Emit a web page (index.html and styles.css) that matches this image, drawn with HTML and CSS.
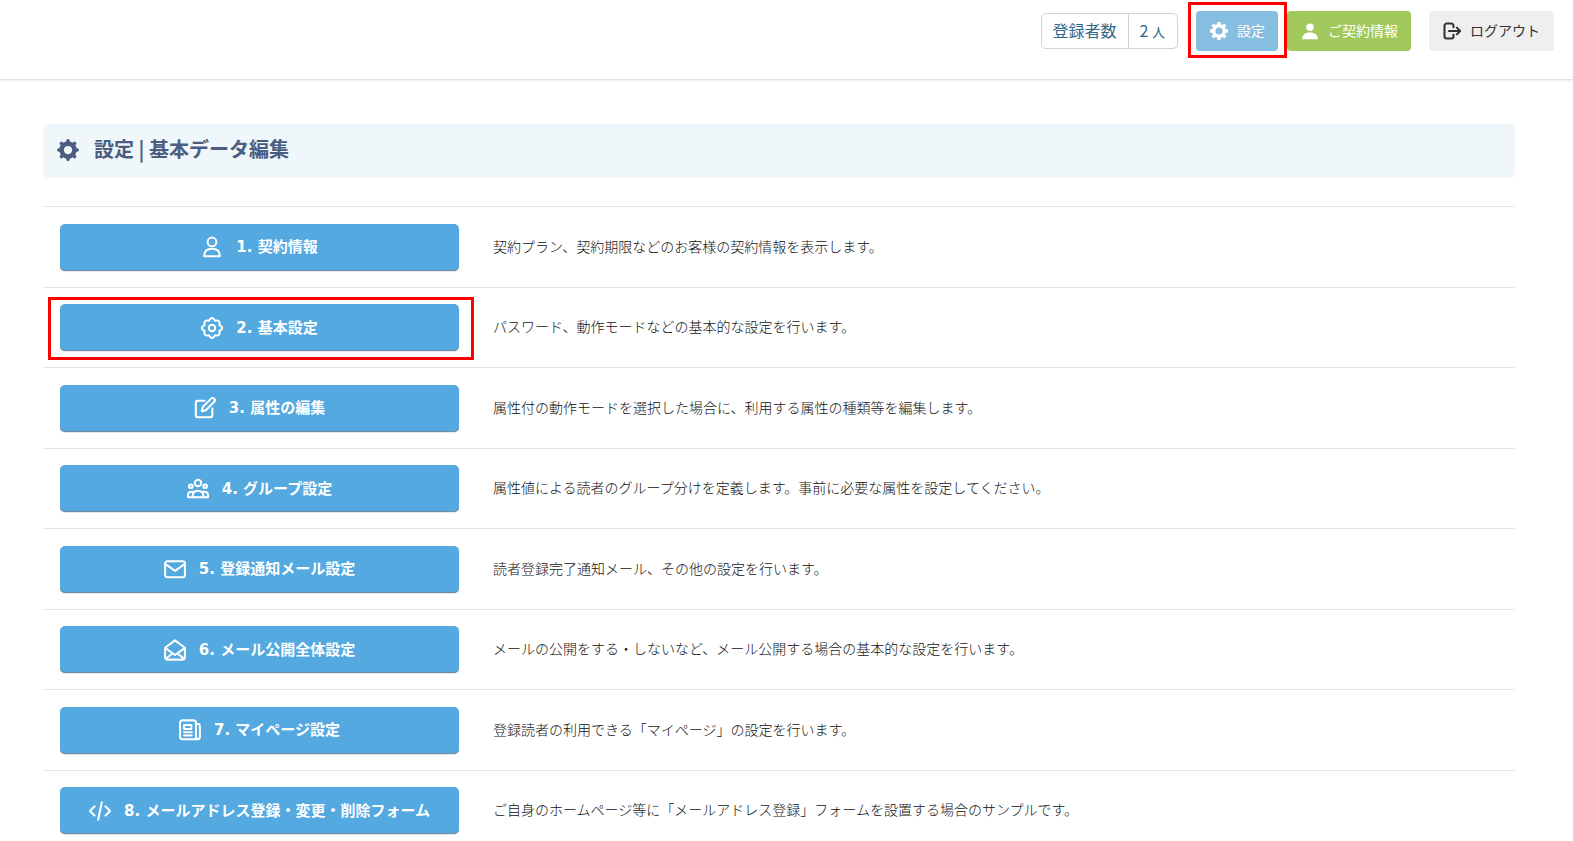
FILE: index.html
```html
<!DOCTYPE html>
<html lang="ja">
<head>
    <meta charset="UTF-8">
    <meta name="viewport" content="width=device-width, initial-scale=1.0">
    <title>設定 | 基本データ編集</title>
    <link rel="stylesheet" href="styles.css">
</head>
<body>
    <header class="header">
        <dl class="counter">
            <dt>登録者数</dt>
            <dd>2 <small>人</small></dd>
        </dl>
        <div class="marked marked-nav">
            <button type="button" class="btn-nav btn-settings">
                <svg class="icon-sm" viewBox="0 0 24 24" fill="none" stroke="currentColor" stroke-width="4.5">
                    <circle cx="12" cy="12" r="7"/>
                    <path stroke-width="4.4" d="M12 0v5M12 19v5M0 12h5M19 12h5M3.5 3.5l3.2 3.2M17.3 17.3l3.2 3.2M3.5 20.5l3.2-3.2M17.3 6.7l3.2-3.2"/>
                </svg>
                <span>設定</span>
            </button>
        </div>
        <button type="button" class="btn-nav btn-contract">
            <svg class="icon-sm" viewBox="0 0 24 24" fill="currentColor">
                <circle cx="12" cy="7" r="5"/>
                <path d="M1.5 23c0-6 4-9 10.5-9s10.5 3 10.5 9z"/>
            </svg>
            <span>ご契約情報</span>
        </button>
        <button type="button" class="btn-nav btn-logout">
            <svg class="icon-sm" viewBox="0 0 24 24" fill="none" stroke="currentColor" stroke-width="2.8" stroke-linecap="round" stroke-linejoin="round">
                <path d="M14 7V5a3 3 0 0 0-3-3H5a3 3 0 0 0-3 3v14a3 3 0 0 0 3 3h6a3 3 0 0 0 3-3v-2M8 12h15M18.5 7.5 23 12l-4.5 4.5"/>
            </svg>
            <span>ログアウト</span>
        </button>
    </header>

    <main class="content">
        <h1 class="page-title">
            <svg class="icon" viewBox="0 0 24 24" fill="none" stroke="currentColor" stroke-width="5" stroke-linecap="round">
                <circle cx="12" cy="12" r="7"/>
                <path stroke-width="4" d="M12 2v3M12 19v3M2 12h3M19 12h3M4.9 4.9l2 2M17.1 17.1l2 2M4.9 19.1l2-2M17.1 6.9l2-2"/>
            </svg>
            <span>設定 | 基本データ編集</span>
        </h1>

        <table class="menu">
            <tr>
                <td>
                    <button type="button" class="btn-menu">
                        <svg class="icon" viewBox="0 0 24 24">
                            <circle cx="12" cy="6.5" r="4.8"/>
                            <path d="M3.5 22c0-5 3-8 8.5-8s8.5 3 8.5 8z"/>
                        </svg>
                        <span>1. 契約情報</span>
                    </button>
                </td>
                <td>契約プラン、契約期限などのお客様の契約情報を表示します。</td>
            </tr>
            <tr>
                <td>
                    <div class="marked marked-menu">
                        <button type="button" class="btn-menu">
                            <svg class="icon" viewBox="0 0 24 24">
                                <path d="M8.7 4Q12-2 15.3 4Q21.4 2.6 20 8.7Q26 12 20 15.3Q21.4 21.4 15.3 20Q12 26 8.7 20Q2.6 21.4 4 15.3Q-2 12 4 8.7Q2.6 2.6 8.7 4z"/>
                                <circle cx="12" cy="12" r="3.5"/>
                            </svg>
                            <span>2. 基本設定</span>
                        </button>
                    </div>
                </td>
                <td>パスワード、動作モードなどの基本的な設定を行います。</td>
            </tr>
            <tr>
                <td>
                    <button type="button" class="btn-menu">
                        <svg class="icon" viewBox="0 0 24 24">
                            <path d="M11.5 4H4a2 2 0 0 0-2 2v14a2 2 0 0 0 2 2h14a2 2 0 0 0 2-2v-7.5"/>
                            <path d="M8.5 15.5l1-4.5 9.2-9.2a2.2 2.2 0 0 1 3.3 3.3L13 14.5z"/>
                        </svg>
                        <span>3. 属性の編集</span>
                    </button>
                </td>
                <td>属性付の動作モードを選択した場合に、利用する属性の種類等を編集します。</td>
            </tr>
            <tr>
                <td>
                    <button type="button" class="btn-menu">
                        <svg class="icon" viewBox="0 0 24 24">
                            <circle cx="12" cy="5.5" r="3.5"/>
                            <circle cx="4.2" cy="9" r="2"/>
                            <circle cx="19.8" cy="9" r="2"/>
                            <path d="M6 21c0-4.5 2-7 6-7s6 2.5 6 7zM6 21H1v-2.5c0-2.500 2-3.800 5.500-3.500M18 21h5v-2.500c0-2.500-2-3.800-5.500-3.500"/>
                        </svg>
                        <span>4. グループ設定</span>
                    </button>
                </td>
                <td>属性値による読者のグループ分けを定義します。事前に必要な属性を設定してください。</td>
            </tr>
            <tr>
                <td>
                    <button type="button" class="btn-menu">
                        <svg class="icon" viewBox="0 0 24 24">
                            <rect x="1.2" y="3.5" width="21.6" height="17.5" rx="2.5"/>
                            <path d="M2 7l10 7 10-7"/>
                        </svg>
                        <span>5. 登録通知メール設定</span>
                    </button>
                </td>
                <td>読者登録完了通知メール、その他の設定を行います。</td>
            </tr>
            <tr>
                <td>
                    <button type="button" class="btn-menu">
                        <svg class="icon" viewBox="0 0 24 24">
                            <path d="M1.2 9.5 12 1.5l10.8 8V20a2.5 2.5 0 0 1-2.5 2.5H3.7A2.5 2.5 0 0 1 1.2 20zM1.5 10l10.5 7.5L22.5 10M2 21.5l7.5-6M22 21.5l-7.5-6"/>
                        </svg>
                        <span>6. メール公開全体設定</span>
                    </button>
                </td>
                <td>メールの公開をする・しないなど、メール公開する場合の基本的な設定を行います。</td>
            </tr>
            <tr>
                <td>
                    <button type="button" class="btn-menu">
                        <svg class="icon" viewBox="0 0 24 24">
                            <path d="M18.5 5.5V4A2.5 2.5 0 0 0 16 1.5H3.7A2.5 2.5 0 0 0 1.2 4v15.5A2.5 2.5 0 0 0 3.7 22H20.5M18.5 5.5H21a2 2 0 0 1 1.8 2v12a2.150 2.250 0 0 1-4.3 0z"/>
                            <path d="M5.5 6.5h8v4.5h-8zM5.5 14.5h8.5M5.5 18h8.5"/>
                        </svg>
                        <span>7. マイページ設定</span>
                    </button>
                </td>
                <td>登録読者の利用できる「マイページ」の設定を行います。</td>
            </tr>
            <tr>
                <td>
                    <button type="button" class="btn-menu">
                        <svg class="icon" viewBox="0 0 24 24">
                            <path d="M6 7l-5 5 5 5M18 7l5 5-5 5M14 2.5l-4 19"/>
                        </svg>
                        <span>8. メールアドレス登録・変更・削除フォーム</span>
                    </button>
                </td>
                <td>ご自身のホームページ等に「メールアドレス登録」フォームを設置する場合のサンプルです。</td>
            </tr>
        </table>
    </main>
</body>
</html>
```
FILE: styles.css
```css
:root {
    --blue: #53a9e0;
    --blue-light: #86bee1;
    --green: #a0c85a;
    --title: #4b5d80;
    --title-bg: #eff7fb;
    --border: #e5e5e5;
    --mark: #ff0000;
}

* {
    margin: 0;
    padding: 0;
    box-sizing: border-box;
}

body {
    font-family: "Noto Sans CJK JP", sans-serif;
    font-size: 14px;
    color: #333;
    background: #fff;
}

button {
    font-family: inherit;
    border: none;
    cursor: pointer;
}

/* Header */
.header {
    display: flex;
    justify-content: flex-end;
    align-items: flex-start;
    height: 80px;
    padding: 11px 19px 0;
    border-bottom: 1px solid #e0e0e0;
    box-shadow: 0 1px 2px rgba(0, 0, 0, 0.08);
}

.counter {
    display: flex;
    height: 36px;
    margin: 2px 18px 0 0;
    border: 1px solid #ccd3da;
    border-radius: 5px;
    font-size: 16px;
    line-height: 32px;
    color: #33698c;
}

.counter dt {
    padding: 0 11px;
}

.counter dd {
    padding: 0 12px 0 11px;
    border-left: 1px solid #ccd3da;
}

.counter small {
    font-size: 13px;
}

.btn-nav {
    display: flex;
    align-items: center;
    gap: 9px;
    height: 40px;
    padding: 0 13px 0 14px;
    border-radius: 4px;
    font-size: 14px;
    color: #fff;
}

.btn-nav span {
    padding-bottom: 3px;
}

.btn-settings {
    background: var(--blue-light);
}

.btn-contract {
    margin: 0 18px 0 9px;
    background: var(--green);
}

.btn-logout {
    padding-right: 14px;
    background: #efefef;
    color: #333;
}

/* Icons */
.icon {
    flex: none;
    width: 22px;
    height: 22px;
}

.icon-sm {
    flex: none;
    width: 18px;
    height: 18px;
}

/* Red frame around the items to click */
.marked {
    position: relative;
}

.marked::after {
    content: "";
    position: absolute;
    border: 3px solid var(--mark);
    pointer-events: none;
    z-index: 1;
}

.marked-nav::after {
    inset: -9px -9px -7px -8px;
}

.marked-menu::after {
    inset: -7px -15px -9px -12px;
}

/* Content */
.content {
    padding: 44px 58px 0 43px;
}

.page-title {
    display: flex;
    align-items: center;
    gap: 15px;
    height: 54px;
    margin-bottom: 28px;
    padding: 0 14px 3px;
    border-radius: 5px;
    background: var(--title-bg);
    font-size: 20px;
    color: var(--title);
}

.page-title span {
    padding-bottom: 3px;
}

.menu {
    width: 100%;
    border-collapse: collapse;
}

.menu td {
    height: 81px;
    padding: 0 17px;
    border-top: 1px solid var(--border);
    vertical-align: middle;
}

.menu tr:nth-child(even) td {
    height: 80px;
}

.menu td:first-child {
    width: 433px;
}

.menu td:last-child {
    padding-bottom: 3px;
    font-weight: 300;
    color: #111;
}

.btn-menu {
    display: flex;
    align-items: center;
    justify-content: center;
    gap: 13px;
    width: 399px;
    height: 47px;
    border-radius: 5px;
    background: var(--blue);
    box-shadow: inset 0 -1px 0 #6c8da5, 0 1px 1px rgba(0, 0, 0, 0.1);
    font-family: "DejaVu Sans", "Noto Sans CJK JP", sans-serif;
    font-size: 15px;
    font-weight: bold;
    color: #fff;
}

.btn-menu span {
    padding-bottom: 3px;
}

.btn-menu .icon {
    fill: none;
    stroke: currentColor;
    stroke-width: 2.2;
    stroke-linecap: round;
    stroke-linejoin: round;
}
```
